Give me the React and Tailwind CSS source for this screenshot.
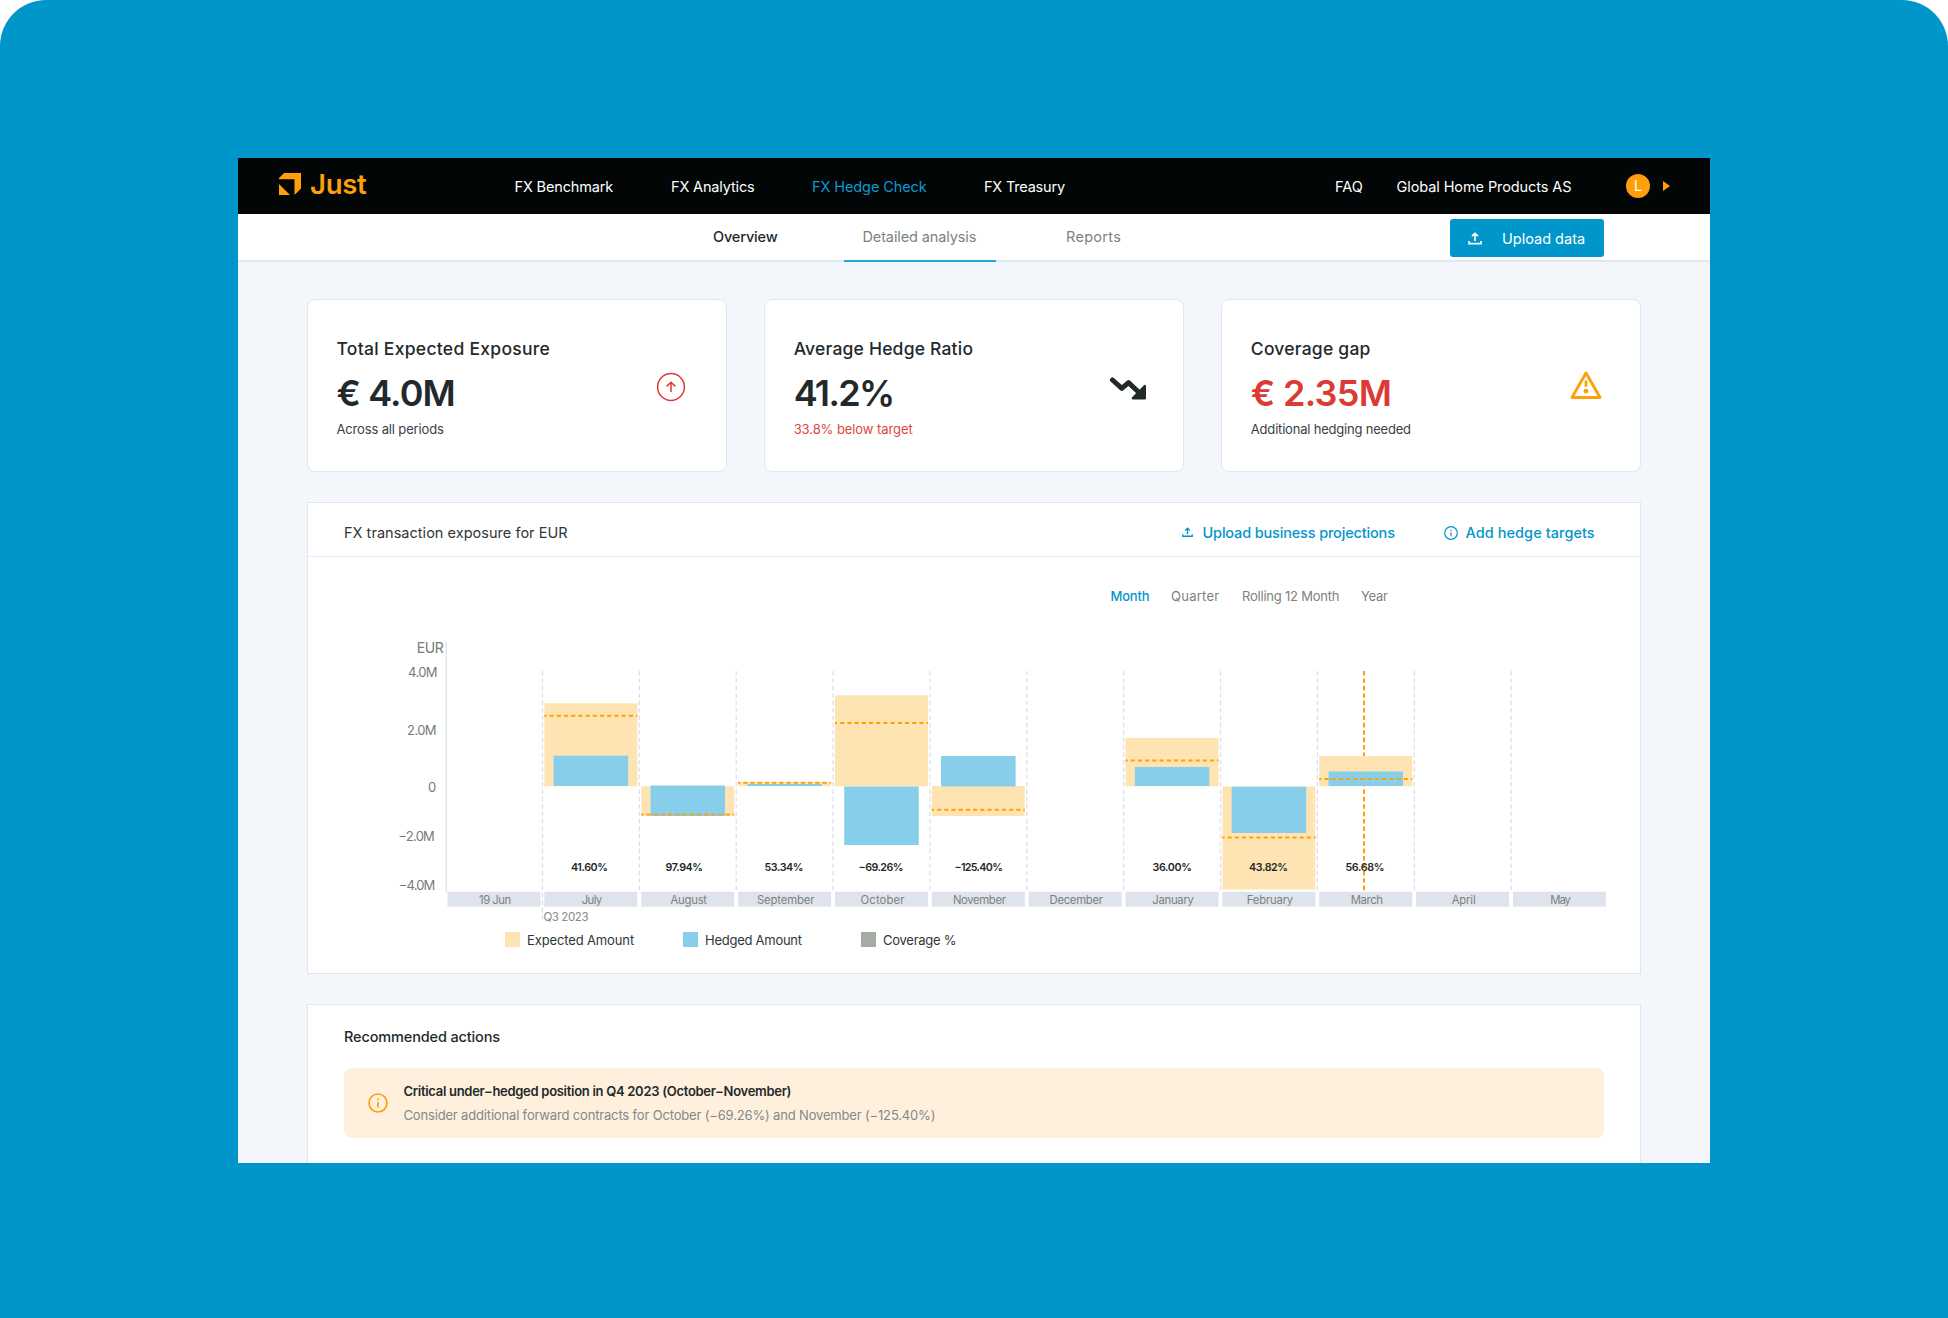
import React from "react";

const UploadIcon = ({ className, stroke = 1.6 }) => (
  <svg viewBox="0 0 14 13" className={className} fill="none" stroke="currentColor" strokeWidth={stroke}>
    <path d="M7 9V1.4M4 4.2 7 1.3l3 2.9M1 9v2.6h12V9" />
  </svg>
);

const InfoIcon = ({ className, stroke = 1.3 }) => (
  <svg viewBox="0 0 20 20" className={className} fill="none" stroke="currentColor" strokeWidth={stroke}>
    <circle cx="10" cy="10" r="9" />
    <path d="M10 9v5.5M10 5.4v1.8" />
  </svg>
);

const navItems = [
  { label: "FX Benchmark", cls: "w-[99px] tracking-[-0.15px] text-white" },
  { label: "FX Analytics", cls: "w-[84px] ml-[57.5px] tracking-[-0.15px] text-white" },
  { label: "FX Hedge Check", cls: "w-[115px] ml-[57px] tracking-[-0.09px] text-[#0a9bd4]" },
  { label: "FX Treasury", cls: "w-[82px] ml-[57px] tracking-[-0.2px] text-white" },
  { label: "FAQ", cls: "w-[29px] ml-[269px] text-white" },
  { label: "Global Home Products AS", cls: "w-[176px] ml-[32.5px] tracking-[-0.09px] text-white" },
];

const months = [
  { name: "19 Jun", w: 32 },
  { name: "July", w: 20.5, exp: [703.3, 786.3], hedge: [755.7, 786], target: 715.7, pct: "41.60%", pw: 37, px: 589.5 },
  { name: "August", w: 36.5, exp: [786.3, 816], hedge: [785.5, 816], target: 814.5, pct: "97.94%", pw: 37.5, px: 684.3 },
  { name: "September", w: 57.5, exp: [782, 786.3], hedge: [784, 786], target: 782.8, pct: "53.34%", pw: 39, px: 784 },
  { name: "October", w: 44, exp: [695.3, 786.3], hedge: [786.5, 845], target: 723, pct: "−69.26%", pw: 45, px: 881 },
  { name: "November", w: 53, exp: [786, 816], hedge: [756, 786.5], target: 809.7, pct: "−125.40%", pw: 48.5, px: 978.7 },
  { name: "December", w: 53.5 },
  { name: "January", w: 41.5, exp: [738, 786.3], hedge: [767, 786], target: 760.5, pct: "36.00%", pw: 39.5, px: 1172.2 },
  { name: "February", w: 46.5, exp: [786.5, 889.5], hedge: [786.7, 833], target: 837.5, pct: "43.82%", pw: 39, px: 1268.6 },
  { name: "March", w: 32, exp: [756, 786.3], hedge: [771.5, 786], target: 779, pct: "56.68%", pw: 39, px: 1365 },
  { name: "April", w: 24 },
  { name: "May", w: 20.5 },
];

const ticks = [
  { t: "EUR", x: 430.3, y: 652.7, w: 27, s: 14 },
  { t: "4.0M", x: 422.8, y: 677, w: 29.5, s: 13 },
  { t: "2.0M", x: 421.8, y: 734.7, w: 29.5, s: 13 },
  { t: "0", x: 432, y: 792.3, w: 8, s: 13 },
  { t: "−2.0M", x: 416.6, y: 841, w: 36.5, s: 13 },
  { t: "−4.0M", x: 417.1, y: 890, w: 36.5, s: 13 },
];

function Chart() {
  const step = 96.86;
  return (
    <svg viewBox="308 630 1332 294" className="h-[294px] w-[1332px] shrink-0">
      <line x1="446.3" x2="446.3" y1="641.7" y2="893" stroke="#dfe6f1" strokeWidth="1.4" />
      {months.slice(1).map((m, i) => (
        <line key={m.name} x1={542.5 + i * step} x2={542.5 + i * step} y1="671" y2={i === 0 ? 922 : 893} stroke="#dcdfec" strokeWidth="1.3" strokeDasharray="4.6 2.8" />
      ))}
      <line x1="1364" x2="1364" y1="671" y2="892" stroke="#ff9f0a" strokeWidth="2" strokeDasharray="4.6 2.8" />
      {months.map((m, i) => {
        const x = 447.5 + i * step;
        return (
          <g key={m.name}>
            <rect x={x} y="891.7" width="93" height="15" fill="#dfe3ec" />
            <text x={x + 47.6} y="903.5" textAnchor="middle" fontSize="11.3" textLength={m.w} fill="#7b827e">{m.name}</text>
            {m.exp && (
              <>
                <rect x={x} y={m.exp[0]} width="93" height={m.exp[1] - m.exp[0]} fill="#ffe4b3" />
                <rect x={x + 9.3} y={m.hedge[0]} width="74.5" height={m.hedge[1] - m.hedge[0]} fill="#87ceea" />
                <line x1={x} x2={x + 93} y1={m.target} y2={m.target} stroke="#ff9f0a" strokeWidth="2" strokeDasharray="4.2 3" strokeDashoffset="2" />
                <text x={m.px} y="871.3" textAnchor="middle" fontSize="10.7" fontWeight="600" textLength={m.pw} fill="#22292b">{m.pct}</text>
              </>
            )}
          </g>
        );
      })}
      {ticks.map((k) => (
        <text key={k.t} x={k.x} y={k.y} textAnchor="middle" fontSize={k.s} textLength={k.w} fill="#757c79">{k.t}</text>
      ))}
      <text x="543.5" y="921" fontSize="11.5" textLength="45" fill="#858b88">Q3 2023</text>
    </svg>
  );
}

const cards = [
  {
    title: "Total Expected Exposure", tc: "w-[214px] tracking-[0.28px]", value: "€ 4.0M", vc: "w-[120px] tracking-[-0.9px] text-[#22292b]", note: "Across all periods", nc: "w-[108px] tracking-[-0.15px] text-[#3a4143]",
    icon: (
      <svg viewBox="0 0 30 30" className="mr-[39.5px] mt-[72px] size-[30px]" fill="none" stroke="#e03a36" strokeWidth="1.5">
        <circle cx="15" cy="15" r="13.4" />
        <path d="M15 20v-9.6M10.6 14.4 15 10.2l4.4 4.2" />
      </svg>
    ),
  },
  {
    title: "Average Hedge Ratio", tc: "w-[180px] tracking-[0.2px]", value: "41.2%", vc: "w-[100px] tracking-[-1.65px] text-[#22292b]", note: "33.8% below target", nc: "w-[120px] tracking-[-0.08px] text-[#e0443f]",
    icon: (
      <svg viewBox="0 0 38 24" className="mr-[36px] mt-[75.5px] h-[24px] w-[38px]" fill="none">
        <path d="M3.5 4 L12.8 12.4 L19.5 6.6 L30 16.5" stroke="#22292b" strokeWidth="5" strokeLinecap="round" strokeLinejoin="round" />
        <path d="M35.8 10v12.2H24z" fill="#22292b" stroke="#22292b" strokeWidth="2.4" strokeLinejoin="round" />
      </svg>
    ),
  },
  {
    title: "Coverage gap", tc: "w-[120px] tracking-[0.22px]", value: "€ 2.35M", vc: "w-[142px] tracking-[-0.7px] text-[#dc3a34]", note: "Additional hedging needed", nc: "w-[161px] tracking-[-0.2px] text-[#3a4143]",
    icon: (
      <svg viewBox="0 0 32 30" className="mr-[38.5px] mt-[70px] h-[30px] w-[32px]" fill="none" stroke="#ff9f0a">
        <path d="M16 3 30 27.5H2z" strokeWidth="2.9" strokeLinejoin="round" />
        <path d="M16 10.5v6.2" strokeWidth="2.8" />
        <circle cx="16" cy="21.2" r="2.4" fill="#ff9f0a" stroke="none" />
      </svg>
    ),
  },
];

const views = [
  { label: "Month", cls: "w-[39px] tracking-[-0.2px] font-medium text-[#0096cc]" },
  { label: "Quarter", cls: "w-[49px] ml-[21.5px] tracking-[0.25px] text-[#7b827e]" },
  { label: "Rolling 12 Month", cls: "w-[98px] ml-[22px] tracking-[-0.22px] text-[#7b827e]" },
  { label: "Year", cls: "w-[27px] ml-[21px] tracking-[-0.3px] text-[#7b827e]" },
];

const legend = [
  { label: "Expected Amount", box: "bg-[#ffe4b3]", cls: "tracking-[-0.13px]" },
  { label: "Hedged Amount", box: "bg-[#87ceea]", cls: "tracking-[-0.26px]" },
  { label: "Coverage %", box: "bg-[#a3ada1]", cls: "tracking-[-0.25px]" },
];

export default function App() {
  return (
    <div className="h-[1318px] w-[1948px] overflow-hidden bg-white font-['Inter',sans-serif]">
      <div className="h-full rounded-t-[46px] bg-[#0096cc] pl-[238px] pt-[158px]">
        <div className="flex h-[1005.3px] w-[1472px] flex-col overflow-hidden whitespace-nowrap bg-[#f3f7fc]">
          <header className="flex h-14 shrink-0 items-center bg-[#020606] text-[14.5px]">
            <svg viewBox="0 0 22 22" className="mb-[4px] ml-[41px] size-[22px] shrink-0" fill="#ff9f0a">
              <path d="M5 0h17v15.5L15.5 22V6.3H0V5z" />
              <path d="M0 11 11 22H0z" />
            </svg>
            <span className="mb-[2px] ml-[9px] w-[57px] text-[27.5px] font-semibold tracking-[-0.3px] text-[#ff9f0a]">Just</span>
            <nav className="ml-[147.5px] flex pt-px">
              {navItems.map((n) => (
                <span key={n.label} className={"shrink-0 " + n.cls}>{n.label}</span>
              ))}
            </nav>
            <span className="ml-[53.5px] flex size-6 items-center justify-center rounded-full bg-[#ff9f0a] text-sm text-white">L</span>
            <svg viewBox="0 0 7 10" className="ml-[13px] h-[10px] w-[7px]" fill="#ff9f0a"><path d="M0 0l7 5-7 5z" /></svg>
          </header>
          <div className="flex h-12 shrink-0 border-b-2 border-[#e3e8f0] bg-white text-[14.5px]">
            <span className="ml-[475px] mt-[12px] h-[22px] w-[65px] font-medium leading-[22px] tracking-[-0.15px] text-[#22292b]">Overview</span>
            <span className="ml-[65.5px] flex h-12 w-[152px] justify-center border-b-2 border-[#27a5d8] pt-[12px]">
              <span className="h-[22px] w-[114px] leading-[22px] tracking-[-0.12px] text-[#7b827e]">Detailed analysis</span>
            </span>
            <span className="ml-[70.5px] mt-[12px] h-[22px] w-[56px] leading-[22px] tracking-[0.3px] text-[#7b827e]">Reports</span>
            <button className="ml-[327.5px] mt-[5px] flex h-[38px] w-[154.5px] items-center rounded-[3px] bg-[#0096cc] text-white">
              <UploadIcon className="ml-[18px] mt-px h-[13px] w-[14px]" />
              <span className="ml-[20.5px] mt-px w-[83px] text-left">Upload data</span>
            </button>
          </div>
          <main className="ml-[69px] mt-[37px] flex w-[1334px] flex-col">
            <div className="flex gap-[37.5px]">
              {cards.map((c) => (
                <section key={c.title} className="flex h-[173px] flex-1 justify-between rounded-lg border border-[#e1e6ef] bg-white pl-[28.5px]">
                  <div className="flex flex-col pt-[36.5px] text-[#22292b]">
                    <span className={"h-[24px] text-[17.5px] font-medium leading-[24px] " + c.tc}>{c.title}</span>
                    <span className={"mt-[10.5px] h-[44px] text-[36px] font-semibold leading-[44px] " + c.vc}>{c.value}</span>
                    <span className={"mt-[4px] h-[20px] text-[13px] leading-[20px] " + c.nc}>{c.note}</span>
                  </div>
                  {c.icon}
                </section>
              ))}
            </div>
            <section className="mt-[30px] flex h-[472px] flex-col border border-[#e1e6ef] bg-white">
              <div className="flex h-[54px] shrink-0 items-center border-b border-[#e8eef6] pl-[36px] pt-[6px] text-[14.5px] text-[#2f3638]">
                <span className="w-[224px] tracking-[0.03px]">FX transaction exposure for EUR</span>
                <UploadIcon className="ml-[614px] h-[10.5px] w-[11px] text-[#0096cc]" stroke={1.7} />
                <span className="ml-[9.5px] w-[193px] font-medium tracking-[-0.16px] text-[#0096cc]">Upload business projections</span>
                <InfoIcon className="ml-[48.5px] size-[14px] text-[#0096cc]" stroke={1.7} />
                <span className="ml-[7.5px] w-[130px] font-medium tracking-[0.06px] text-[#0096cc]">Add hedge targets</span>
              </div>
              <div className="mt-[28.5px] flex h-[20px] shrink-0 pl-[802.5px] text-[13px] leading-[20px]">
                {views.map((v) => (
                  <span key={v.label} className={"shrink-0 " + v.cls}>{v.label}</span>
                ))}
              </div>
              <div className="mt-[24px] h-[294px] shrink-0"><Chart /></div>
              <div className="mt-[6px] flex gap-[23px] pl-[197px] text-[13px] leading-[20px] text-[#2f3638]">
                {legend.map((l) => (
                  <div key={l.label} className="flex w-[155px] items-center">
                    <span className={"size-[15px] shrink-0 " + l.box} />
                    <span className={"ml-[7px] shrink-0 " + l.cls}>{l.label}</span>
                  </div>
                ))}
              </div>
            </section>
            <section className="mt-[30px] flex h-[300px] flex-col border border-[#e1e6ef] bg-white pl-[36px] pt-[20px]">
              <span className="h-[24px] w-[157px] text-[14.5px] font-medium leading-[24px] tracking-[-0.14px] text-[#22292b]">Recommended actions</span>
              <div className="mt-[18.5px] flex h-[70.5px] w-[1260px] items-center rounded-lg bg-[#fff0dd] pl-[24px]">
                <InfoIcon className="size-[20px] text-[#ff9f0a]" stroke={1.7} />
                <div className="ml-[15.5px] flex flex-col text-[13px] leading-[24px]">
                  <span className="w-[388px] font-semibold tracking-[-0.29px] text-[#22292b]">Critical under−hedged position in Q4 2023 (October−November)</span>
                  <span className="w-[532px] tracking-[-0.165px] text-[#7f8a89]">Consider additional forward contracts for October (−69.26%) and November (−125.40%)</span>
                </div>
              </div>
            </section>
          </main>
        </div>
      </div>
    </div>
  );
}
